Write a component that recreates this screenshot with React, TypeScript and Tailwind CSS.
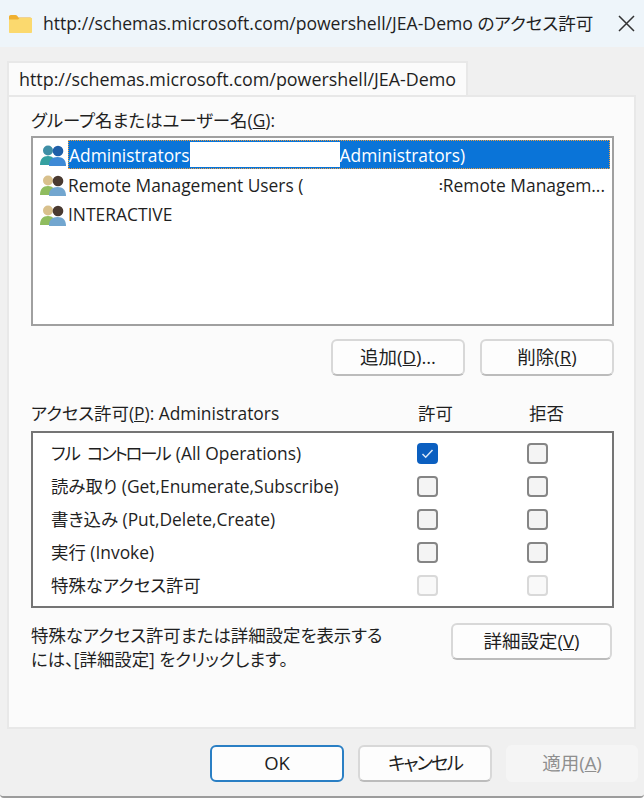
import type { ReactNode } from "react";

const FONT = "font-['Open_Sans','Noto_Sans_CJK_JP',sans-serif] [font-feature-settings:'palt']";

function FolderIcon() {
  return (
    <svg width="23" height="18" viewBox="0 0 23 18" className="shrink-0">
      <path d="M0 1.800C0 .8.800 0 1.800 0h4.700c.6 0 1 .2 1.400.6L9.500 2.500h11.700c1 0 1.800.8 1.800 1.800V6H0z" fill="#f0b030" />
      <path d="M0 4.500h9l1.500-1.500H23v14c0 .6-.4 1-1 1H1c-.6 0-1-.4-1-1z" fill="#fbd96e" />
    </svg>
  );
}

function UsersIcon({ blue }: { blue?: boolean }) {
  const backHead = blue ? "#3f8fa6" : "#d8c08c";
  const backBody = blue ? "#35a0a0" : "#8fbc5f";
  const frontHead = blue ? "#1f5fa8" : "#4a3a30";
  const frontBody = blue ? "#3e8ad6" : "#72a6cf";
  return (
    <svg width="26" height="24" viewBox="0 0 26 24" className="shrink-0">
      <circle cx="8" cy="7.500" r="5" fill={backHead} />
      <path d="M0 22c0-6 3-9 8-9s7 3 7 9z" fill={backBody} />
      <circle cx="18" cy="8" r="5.300" fill={frontHead} />
      <path d="M9 23c0-6 3-9 8.500-9S26 17 26 23z" fill={frontBody} />
    </svg>
  );
}

function Button({
  label,
  hotkey,
  suffix,
  width,
  primary,
  disabled,
  tight,
}: {
  label: string;
  hotkey?: string;
  suffix?: string;
  width: string;
  primary?: boolean;
  disabled?: boolean;
  tight?: boolean;
}) {
  let look = "bg-[#fdfdfd] border-[#d8d8d8] border-b-[#bcbcbc] text-[#1f1f1f]";
  if (primary) look = "bg-[#fdfdfd] border-[#2a7fc4] text-[#1f1f1f]";
  if (disabled) look = "bg-[#f5f5f5] border-[#f5f5f5] text-[#8f8f8f]";
  return (
    <button className={`h-[37px] ${width} shrink-0 rounded-[6px] border-2 text-[18.500px] leading-none ${tight ? "tracking-[-2px]" : ""} ${look}`}>
      {label}
      {hotkey && (
        <>
          (<u>{hotkey}</u>)
        </>
      )}
      {suffix}
    </button>
  );
}

function Check({ checked, disabled }: { checked?: boolean; disabled?: boolean }) {
  if (checked) {
    return (
      <div className="w-[21px] h-[21px] rounded-[4px] bg-[#0b5fc0] flex items-center justify-center">
        <svg width="13" height="11" viewBox="0 0 13 11" fill="none" stroke="#dbe8f7" strokeWidth="1.500">
          <path d="M1.500 6l3.200 3.200L11.500 2" />
        </svg>
      </div>
    );
  }
  const look = disabled ? "border-[#d9d9d9] bg-[#f9f9f9]" : "border-[#858585] bg-[#f4f4f4]";
  return <div className={`w-[21px] h-[21px] rounded-[4px] border-2 ${look}`}></div>;
}

const perms: { name: ReactNode; allow?: boolean; disabled?: boolean }[] = [
  {
    name: (
      <>
        <span className="tracking-[-1px]">フル</span>
        <span className="ml-[7px] tracking-[-2.200px]">コントロール</span>
        <span className="ml-[2px]"> (All Operations)</span>
      </>
    ),
    allow: true,
  },
  { name: "読み取り (Get,Enumerate,Subscribe)" },
  { name: "書き込み (Put,Delete,Create)" },
  { name: "実行 (Invoke)" },
  { name: "特殊なアクセス許可", disabled: true },
];

export default function App() {
  return (
    <div className={`w-[644px] h-[798px] overflow-hidden rounded-b-[4px] border-b-2 border-[#9c9c9c] bg-[#f0f0f0] text-[#1f1f1f] ${FONT}`}>
      {/* Title bar */}
      <div className="h-[47px] bg-[#eef5fa] flex items-center pl-[9px] pr-[7px]">
        <FolderIcon />
        <div className="ml-[11px] text-[17.600px] whitespace-nowrap">
          http://schemas.microsoft.com/powershell/JEA-Demo のアクセス許可
        </div>
        <svg width="17" height="17" viewBox="0 0 17 17" className="ml-auto mr-[2px]" stroke="#333" strokeWidth="1.500">
          <path d="M1 1l15 15M16 1L1 16" />
        </svg>
      </div>

      {/* Tab */}
      <div className="pl-[7px] pt-[14px]">
        <div className="w-[461px] h-[35px] bg-[#fbfbfb] border-2 border-b-0 border-[#e8e8e8] flex items-center pl-[10px] text-[17.900px] whitespace-nowrap">
          http://schemas.microsoft.com/powershell/JEA-Demo
        </div>

        {/* Panel */}
        <div className="w-[629px] h-[634px] -mt-[1px] bg-[#fbfbfb] border-2 border-[#e8e8e8] pl-[22px] pr-[20px] text-[17.400px]">
          <div className="h-[39px] pt-[12px] leading-[22px]">
            グループ名またはユーザー名(<u>G</u>):
          </div>

          <div className="w-[583px] h-[190px] bg-white border-2 border-[#a0a0a0] pt-[2px] pl-[7px] pr-[2px]">
            <div className="h-[29px] flex items-center">
              <UsersIcon blue />
              <div className="flex-1 h-[29px] ml-[2px] pt-[2px] bg-[#0a74d8] border border-dotted border-[#f0a040] text-white flex items-center whitespace-nowrap">
                Administrators
                <span className="w-[150px] h-[25px] -mt-[2px] bg-white shrink-0"></span>
                Administrators)
              </div>
            </div>
            <div className="h-[30px] pt-[2px] flex items-center whitespace-nowrap">
              <UsersIcon />
              <span className="ml-[2px]">Remote Management Users (</span>
              <span className="ml-auto text-[13px] font-bold leading-none">:</span>
              <span className="mr-[5px]">Remote Managem...</span>
            </div>
            <div className="h-[29px] pt-[2px] flex items-center whitespace-nowrap">
              <UsersIcon />
              <span className="ml-[2px]">INTERACTIVE</span>
            </div>
          </div>

          <div className="flex justify-end gap-[15px] mt-[13px]">
            <Button label="追加" hotkey="D" suffix="..." width="w-[134px]" />
            <Button label="削除" hotkey="R" width="w-[134px]" />
          </div>

          <div className="flex items-center h-[55px] pt-[20px]">
            <div className="w-[387px]">
              アクセス許可(<u>P</u>): Administrators
            </div>
            <div className="w-[111px]">許可</div>
            <div>拒否</div>
          </div>

          <div className="w-[583px] h-[177px] bg-white border-2 border-[#757575] pl-[18px] pt-[4px]">
            {perms.map((p, i) => (
              <div key={i} className="h-[33px] flex items-center whitespace-nowrap">
                <div className="w-[366px]">{p.name}</div>
                <div className="w-[110px]">
                  <Check checked={p.allow} disabled={p.disabled} />
                </div>
                <Check disabled={p.disabled} />
              </div>
            ))}
          </div>

          <div className="flex items-start mt-[15px]">
            <div className="w-[420px] leading-[24px]">
              <div>特殊なアクセス許可または詳細設定を表示する</div>
              <div>には、[詳細設定] をクリックします。</div>
            </div>
            <Button label="詳細設定" hotkey="V" width="w-[161px]" />
          </div>
        </div>
      </div>

      {/* Dialog buttons */}
      <div className="flex justify-end gap-[14px] pr-[6px] mt-[16px]">
        <Button label="OK" width="w-[134px]" primary />
        <Button label="キャンセル" width="w-[134px]" tight />
        <Button label="適用" hotkey="A" width="w-[132px]" disabled />
      </div>
    </div>
  );
}
